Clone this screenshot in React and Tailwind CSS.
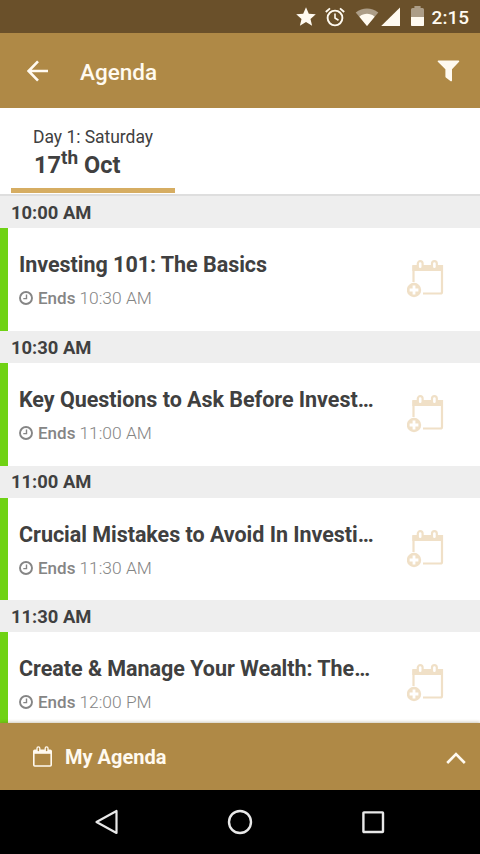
import React from 'react';

const sessions = [
  { start: '10:00 AM', title: 'Investing 101: The Basics', end: '10:30 AM' },
  { start: '10:30 AM', title: 'Key Questions to Ask Before Invest…', end: '11:00 AM' },
  { start: '11:00 AM', title: 'Crucial Mistakes to Avoid In Investi…', end: '11:30 AM' },
  { start: '11:30 AM', title: 'Create & Manage Your Wealth: The…', end: '12:00 PM' },
];

function StatusBar() {
  return (
    <div className="flex h-[33px] shrink-0 items-center justify-end bg-[#6a502a] pr-[11px] text-[#fffaf0]">
      <svg className="mr-[9px] h-[20px] w-[20px]" viewBox="0 0 20 20" fill="currentColor">
        <path d="M10 .2l2.8 6.5 7 .6-5.3 4.6 1.6 6.9-6.1-3.7-6.1 3.7 1.6-6.9L.2 7.3l7-.6z" />
      </svg>
      <svg className="mr-[10px] h-[20px] w-[20px]" viewBox="0 0 20 20" fill="none" stroke="currentColor" strokeWidth="1.9">
        <circle cx="10" cy="11" r="7.4" />
        <path d="M.8 5L5 1.4M19.2 5L15 1.4" />
        <path d="M10 6.5V11l3.5 2.2" strokeWidth="1.6" />
      </svg>
      <svg className="mr-[2px] h-[20px] w-[24px]" viewBox="0 0 24 20">
        <path d="M.7 5.5C7.5.2 16.5.2 23.3 5.5L12 19z" fill="#ac9d87" />
        <path d="M4.4 9.7c4.4-3.8 10.8-3.8 15.2 0L12 19z" fill="currentColor" />
      </svg>
      <svg className="mr-[11px] h-[20px] w-[19px]" viewBox="0 0 19 20" fill="currentColor">
        <path d="M19 .5V19H.2z" />
      </svg>
      <svg className="mr-[8px] h-[21px] w-[13px]" viewBox="0 0 13 21">
        <path d="M0 11V3.500Q0 2 1.500 2H3.400V0h6.200v2h1.900Q13 2 13 3.500V11z" fill="#ac9d87" />
        <path d="M0 11h13v8.200q0 .8-.8.8H.8Q0 20 0 19.200z" fill="currentColor" />
      </svg>
      <span className="pt-[2px] text-[19px] font-medium leading-none">2:15</span>
    </div>
  );
}

function TitleBar() {
  return (
    <header className="flex h-[75px] shrink-0 items-center bg-[#af8946] pl-[27px] pr-[20px] text-[#fffaf0]">
      <svg className="h-[22px] w-[22px]" viewBox="0 0 22 22" fill="none" stroke="currentColor" strokeWidth="2.600">
        <path d="M21 11H2M11 1.300L1.600 11l9.400 9.700" />
      </svg>
      <h1 className="ml-[31px] pt-[3px] text-[22.500px] font-medium leading-none">Agenda</h1>
      <svg className="ml-auto h-[22px] w-[23px]" viewBox="0 0 23 22" fill="currentColor">
        <path d="M1.400.4h20.200q1.200.2.500 1.400L15 9.300v11.200q-.2 1.200-1.300.7L8.800 17.500q-.4-.4-.4-1V9.300L.8 1.800Q.1.600 1.400.4z" />
      </svg>
    </header>
  );
}

function ClockIcon() {
  return (
    <svg className="mr-[5px] h-[14px] w-[14px]" viewBox="0 0 14 14" fill="none" stroke="currentColor">
      <circle cx="7" cy="7" r="6" strokeWidth="1.900" />
      <path d="M7.500 3.500v4.100H4.300" strokeWidth="1.400" />
    </svg>
  );
}

function AddToCalendarIcon() {
  return (
    <svg className="h-[38px] w-[37px]" viewBox="0 0 37 38" fill="none" stroke="#f0e0c7">
      <path d="M6.500 22V6H35V32q0 1.500-1.500 1.500H16" strokeWidth="2.200" />
      <path d="M5.400 5.500H36v5.500H5.400z" fill="#f0e0c7" stroke="none" />
      <rect x="10.800" y="1.200" width="4.800" height="8" rx="2.400" fill="#fff" strokeWidth="2.200" />
      <rect x="25" y="1.200" width="4.800" height="8" rx="2.400" fill="#fff" strokeWidth="2.200" />
      <circle cx="7" cy="30" r="7.200" fill="#f0e0c7" stroke="none" />
      <path d="M7 25.600v8.800M2.600 30h8.800" stroke="#fff" strokeWidth="2.800" />
    </svg>
  );
}

function Session({ start, title, end }) {
  return (
    <section className="shrink-0">
      <h2 className="flex h-[32px] items-center bg-[#eeeeee] pl-[11px] pt-[2px] text-[18.400px] font-bold leading-none text-[#404040]">{start}</h2>
      <div className="flex h-[102.800px] border-l-8 border-[#6fd214] bg-white pl-[11px]">
        <div className="min-w-0 flex-1 pt-[23px]">
          <h3 className="whitespace-nowrap text-[21.500px] font-bold leading-[28px] tracking-[-0.03px] text-[#404040]">{title}</h3>
          <p className="mt-[9px] flex items-center whitespace-nowrap text-[17px] leading-[20px] text-[#858585]">
            <ClockIcon />
            <span className="font-medium">Ends</span>
            <span className="ml-[4px] text-[17.400px] font-light">{end}</span>
          </p>
        </div>
        <div className="shrink-0 pr-[36px] pt-[32px]">
          <AddToCalendarIcon />
        </div>
      </div>
    </section>
  );
}

function AgendaBar() {
  return (
    <footer className="flex h-[67px] shrink-0 items-center bg-[#af8946] pl-[33px] pr-[14px] text-[#fffaf0] shadow-[0_-1px_3px_rgba(100,80,30,0.3)]">
      <svg className="h-[21px] w-[19px]" viewBox="0 0 19 21" fill="none" stroke="currentColor">
        <rect x=".8" y="4.300" width="17.400" height="15.700" rx="1" strokeWidth="1.600" />
        <path d="M1 4h17v3.800H1z" fill="currentColor" stroke="none" />
        <rect x="4" y=".8" width="2.800" height="5.200" rx="1.400" fill="#af8946" strokeWidth="1.300" />
        <rect x="12.200" y=".8" width="2.800" height="5.200" rx="1.400" fill="#af8946" strokeWidth="1.300" />
      </svg>
      <span className="ml-[13px] pt-px text-[20px] font-bold leading-none">My Agenda</span>
      <svg className="ml-auto mt-[3px] h-[12px] w-[20px]" viewBox="0 0 20 12" fill="none" stroke="currentColor" strokeWidth="2.600">
        <path d="M1.200 11L10 2l8.800 9" />
      </svg>
    </footer>
  );
}

function NavigationBar() {
  return (
    <nav className="flex h-[64px] shrink-0 items-center justify-between bg-black pl-[95px] pr-[95px] text-[#e8e8e8]">
      <svg className="h-[26px] w-[24px]" viewBox="0 0 24 26" fill="none" stroke="currentColor" strokeWidth="2.200" strokeLinejoin="round">
        <path d="M21.500 2v22L1.500 13z" />
      </svg>
      <svg className="h-[26px] w-[26px]" viewBox="0 0 26 26" fill="none" stroke="currentColor" strokeWidth="2.400">
        <circle cx="13" cy="13" r="11" />
      </svg>
      <svg className="h-[24px] w-[24px]" viewBox="0 0 24 24" fill="none" stroke="currentColor" strokeWidth="2.400">
        <rect x="2.400" y="2.400" width="19.600" height="19.600" rx=".6" />
      </svg>
    </nav>
  );
}

export default function App() {
  return (
    <div className="flex h-[854px] w-[480px] flex-col overflow-hidden bg-white font-['Roboto',sans-serif]">
      <StatusBar />
      <TitleBar />
      <div className="h-[88px] shrink-0 border-b-2 border-[#dedede] bg-white pl-[11px]">
        <div className="flex h-[85px] w-[164px] flex-col border-b-[5px] border-[#d6ad62] pl-[22px] pt-[18px] text-[#404040]">
          <span className="whitespace-nowrap text-[17.500px] leading-[22px] tracking-[-0.03px]">Day 1: Saturday</span>
          <span className="flex whitespace-nowrap pl-px text-[23.500px] font-bold leading-[34px]">
            17<span className="-mt-[7px] mr-[6px] text-[19px]">th</span>Oct
          </span>
        </div>
      </div>
      <main className="flex min-h-0 flex-1 flex-col overflow-hidden">
        {sessions.map((s) => (
          <Session key={s.start} start={s.start} title={s.title} end={s.end} />
        ))}
      </main>
      <AgendaBar />
      <NavigationBar />
    </div>
  );
}
